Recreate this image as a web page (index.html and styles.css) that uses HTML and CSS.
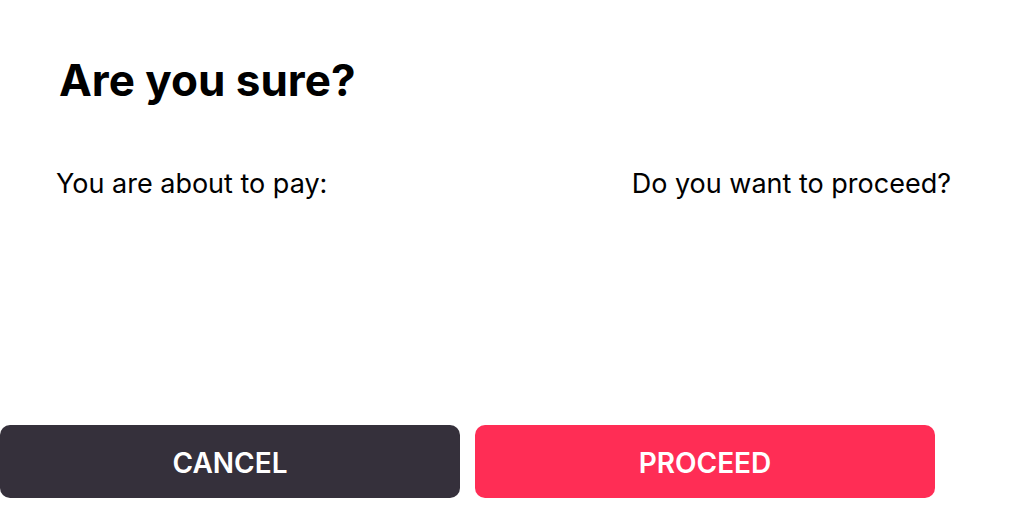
FILE: index.html
```html
<!DOCTYPE html>
<html>
<head>
<meta charset="utf-8">
<link rel="stylesheet" href="styles.css">
</head>
<body>
<div class="dialog">
  <h1 class="title">Are you sure?</h1>
  <div class="row">
    <span class="text">You are about to pay:</span>
    <span class="text">Do you want to proceed?</span>
  </div>
  <div class="actions">
    <button class="btn btn-cancel">CANCEL</button>
    <button class="btn btn-proceed">PROCEED</button>
  </div>
</div>
</body>
</html>
```
FILE: styles.css
```css
html, body {
  margin: 0;
  padding: 0;
  background: #ffffff;
}
body {
  width: 1024px;
  height: 512px;
  overflow: hidden;
  font-family: Inter, "Noto Sans", sans-serif;
  color: #000;
}
.dialog {
  display: flex;
  flex-direction: column;
  height: 512px;
}
.title {
  margin: 0;
  padding: 52px 0 0 59px;
  font-size: 44px;
  font-weight: 700;
  line-height: 56px;
  letter-spacing: 0;
}
.row {
  display: flex;
  justify-content: space-between;
  padding: 60px 73px 0 56px;
}
.text {
  font-size: 27px;
  line-height: 32px;
}
.actions {
  margin-top: auto;
  margin-bottom: 14px;
  display: flex;
  gap: 15px;
  width: 935px;
}
.btn {
  flex: 1;
  height: 73px;
  border: none;
  border-radius: 10px;
  color: #fff;
  font-family: Inter, "Noto Sans", sans-serif;
  font-size: 28px;
  font-weight: 600;
  padding: 3px 0 0;
}
.btn-cancel { background: #35303b; }
.btn-proceed { background: #ff2d55; }
```
